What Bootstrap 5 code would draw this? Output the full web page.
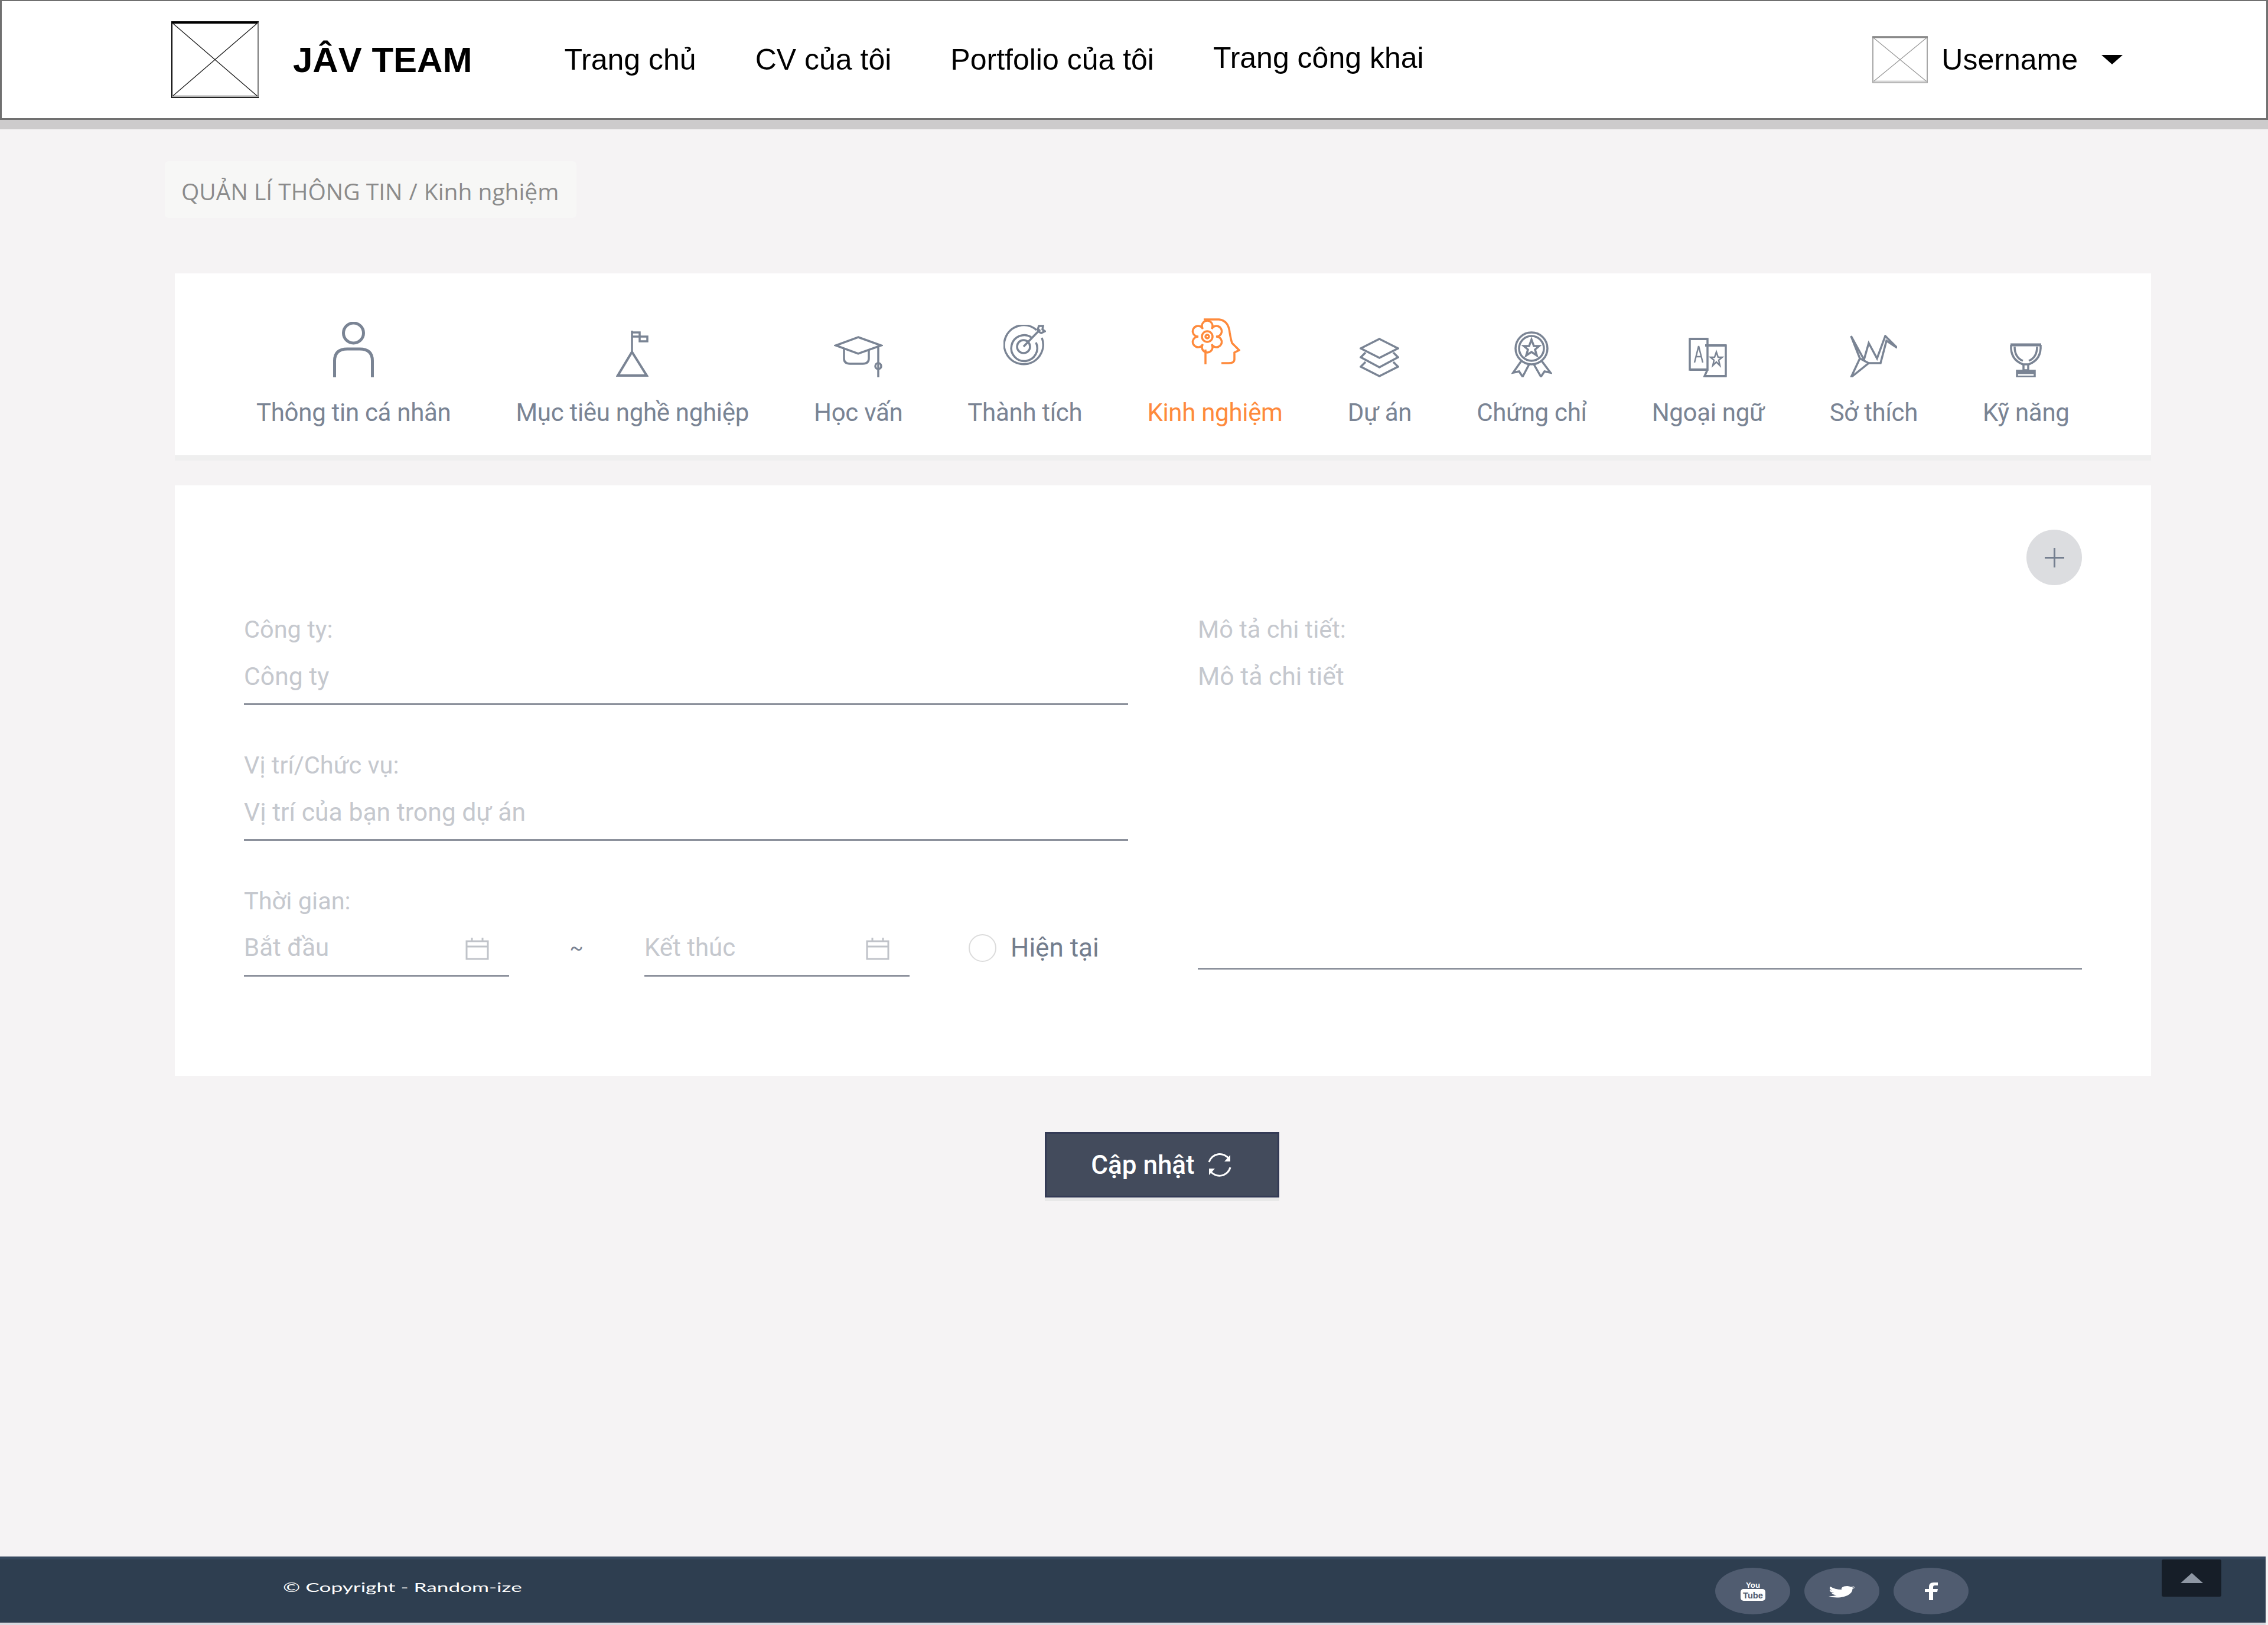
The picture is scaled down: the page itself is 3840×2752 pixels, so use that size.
<!DOCTYPE html>
<html lang="vi">
<head>
    <meta charset="UTF-8">
    <meta name="viewport" content="width=device-width, initial-scale=1.0">
    <title>Kinh nghiệm</title>
    <link href="https://cdn.jsdelivr.net/npm/bootstrap@5.3.0/dist/css/bootstrap.min.css" rel="stylesheet">
    <style>
        body { background: #f5f3f4; min-height: 2752px; font-family: Roboto, sans-serif; }
        .page-top { background: #fff; height: 203px; border: 3px solid #707070; border-top-width: 2px; padding: 0 243px 0 287px; --bs-navbar-nav-link-padding-x: 0; }
        .top-band { height: 16px; background: #cdcbcc; }
        .brand-name { font: bold 60px "Liberation Sans", Arial, sans-serif; color: #000; margin: 0 156px 0 58px; padding: 0; }
        .top-links { gap: 100px; }
        .top-links .nav-link, .user-menu { font: 50px "Liberation Sans", Arial, sans-serif; color: #000; padding: 0; }
        .link-raised { margin-bottom: 6px; }
        .user-menu { gap: 23px; }
        .user-menu::after { border-top: 16px solid #000; border-left: 18px solid transparent; border-right: 18px solid transparent; border-bottom: 0; margin-left: 17px; vertical-align: 2px; }
        .page-main { padding: 54px 198px 0 296px; }
        .crumb { display: inline-flex; background: #f7f7f6; height: 96px; align-items: center; padding: 4px 30px 0 28px; margin: 0 0 94px -17px; border-radius: 6px; font: 39px "Open Sans", sans-serif; --bs-breadcrumb-divider-color: #8b8b8b; --bs-breadcrumb-item-active-color: #8b8b8b; --bs-breadcrumb-item-padding-x: 11px; }
        .crumb .breadcrumb-item { color: #8b8b8b; }
        .tab-card { background: #fff; height: 308px; box-shadow: 0 9px 0 #efefef; padding: 76px 0 0 138px; border: 0; border-radius: 0; margin-bottom: 51px; }
        .tab-list { gap: 110px; }
        .tab-link { padding: 0; color: #7a8494; font-size: 42px; letter-spacing: -.3px; line-height: 50px; display: flex; flex-direction: column; align-items: center; }
        .tab-link:hover { color: #7a8494; }
        .tab-link.current { color: #fe8a3c; }
        .tab-icon { height: 100px; display: flex; align-items: flex-end; margin-bottom: 35px; }
        .tab-icon svg { display: block; fill: none; stroke: #7a8494; stroke-width: 3.5; }
        .current .tab-icon svg { stroke: #fe8a3c; }
        .lift-a svg { margin-bottom: 19px; }
        .lift-b svg { margin-bottom: 22px; }
        .form-card { background: #fff; height: 1000px; padding: 75px 117px 0; border: 0; border-radius: 0; }
        .add-btn { width: 94px; height: 94px; background: #dcdde0; border-radius: 50%; padding: 0; border: 0; }
        .form-cols { --bs-gutter-x: 118px; margin-top: 51px; }
        .field { margin-bottom: 78px; }
        .field-label { font-size: 41.5px; line-height: 48px; color: #c5c8ce; margin: 0 0 31px; display: block; }
        .line-input { border: 0; border-bottom: 3px solid #8c919c; border-radius: 0; padding: 0 0 22px; font-size: 42.7px; line-height: 48px; color: #7a8494; background: transparent; box-shadow: none; }
        .line-input::placeholder { color: #c5c8ce; }
        .detail-input { height: 521px; resize: none; }
        .date-row { gap: 0; }
        .date-box { width: 449px; border-bottom: 3px solid #8c919c; padding-bottom: 22px; }
        .date-box input { border: 0; padding: 0; font-size: 42px; line-height: 48px; height: 48px; width: 340px; background: transparent; outline: 0; }
        .date-box input::placeholder { color: #c5c8ce; }
        .date-box svg { fill: none; stroke: #c0c3c9; stroke-width: 3; margin: 1px 34px -1px auto; flex: none; }
        .tilde { width: 230px; text-align: center; color: #7a8494; font-size: 34px; line-height: 48px; margin-left: -1px; }
        .now-check { margin: 0 0 0 100px; padding: 0; gap: 24px; min-height: 0; }
        .now-check .form-check-input { width: 47px; height: 47px; margin: 0; float: none; border: 2px solid #dcdcdc; }
        .now-check .form-check-label { font-size: 44px; line-height: 48px; color: #737d8d; white-space: nowrap; }
        .save-btn { width: 397px; height: 111px; margin: 95px 0 0 -4px; background: #434b5c; color: #fff; border: 3px solid #333a55; border-radius: 0; box-shadow: 0 6px 0 #e8e8e8; font-size: 44px; font-weight: 500; gap: 20px; padding: 0; }
        .save-btn:hover { background: #434b5c; color: #fff; }
        .page-foot { height: 112px; background: #2e3e50; border-top: 5px solid #36495f; margin: auto 4px 4px 0; padding: 0 75px 0 479px; color: #fff; box-shadow: 0 4px 0 #d9d9df; }
        .copy-text { font: 22px Lato, sans-serif; transform: scaleX(1.6); transform-origin: left center; margin-top: -14px; }
        .social-set { gap: 24px; margin-right: 327px; margin-top: 14px; align-self: flex-start; }
        .social-dot { width: 127px; height: 79px; border-radius: 50%; background: #505c70; }
        .back-top { width: 101px; height: 63px; background: #161e28; border-radius: 3px; }
        .back-top::before { content: ""; border-left: 19px solid transparent; border-right: 19px solid transparent; border-bottom: 17px solid #8e97a3; }
    </style>
</head>
<body class="d-flex flex-column">
    <header class="page-top navbar navbar-expand flex-nowrap">
        <svg width="148" height="130" viewBox="0 0 148 130">
            <path d="M1 1H147V129H1Z" fill="none" stroke="#000" stroke-width="2"/>
            <path d="M0 2H148" stroke="#000" stroke-width="4"/>
            <path d="M147 2V128" stroke="#777" stroke-width="2"/>
            <path d="M1 127H147" stroke="#b5b5b5" stroke-width="3"/>
            <path d="M2 3L146 127M146 3L2 127" stroke="#222" stroke-width="1.4"/>
        </svg>
        <a class="navbar-brand brand-name" href="#">JÂV TEAM</a>
        <ul class="navbar-nav top-links align-items-center">
            <li class="nav-item"><a class="nav-link" href="#">Trang chủ</a></li>
            <li class="nav-item"><a class="nav-link" href="#">CV của tôi</a></li>
            <li class="nav-item"><a class="nav-link" href="#">Portfolio của tôi</a></li>
            <li class="nav-item link-raised"><a class="nav-link" href="#">Trang công khai</a></li>
        </ul>
        <a class="user-menu dropdown-toggle d-flex align-items-center ms-auto text-decoration-none" href="#">
            <svg width="94" height="80" viewBox="0 0 94 80">
                <path d="M1 1H93V79H1Z" fill="none" stroke="#8a8a8a" stroke-width="1.5"/>
                <path d="M0 2H94" stroke="#8a8a8a" stroke-width="3"/>
                <path d="M1 77H93" stroke="#d5d5d5" stroke-width="3"/>
                <path d="M2 3L92 77M92 3L2 77" stroke="#999" stroke-width="1.2"/>
            </svg>
            Username
        </a>
    </header>
    <div class="top-band"></div>

    <main class="page-main">
        <ol class="breadcrumb crumb">
            <li class="breadcrumb-item">QUẢN LÍ THÔNG TIN</li>
            <li class="breadcrumb-item active">Kinh nghiệm</li>
        </ol>

        <div class="card tab-card">
            <ul class="nav tab-list flex-nowrap">
                <li class="nav-item"><a class="nav-link tab-link" href="#">
                    <span class="tab-icon"><svg width="69" height="94" viewBox="0 0 69 94" style="stroke-width:5"><ellipse cx="34.5" cy="19" rx="17" ry="17"/><path d="M2.5 94V66Q2.5 46 24 46H45Q66.5 46 66.5 66V94"/></svg></span>
                    Thông tin cá nhân</a></li>
                <li class="nav-item"><a class="nav-link tab-link" href="#">
                    <span class="tab-icon"><svg width="55" height="79" viewBox="0 0 55 79"><path stroke-width="4" d="M27 36L3 76H52Z"/><path d="M27 0V36"/><path d="M27 3H40V10H53V18H40V10H27"/></svg></span>
                    Mục tiêu nghề nghiệp</a></li>
                <li class="nav-item"><a class="nav-link tab-link" href="#">
                    <span class="tab-icon"><svg width="83" height="70" viewBox="0 0 83 70"><path d="M41 2L80 16L41 30L3 16Z"/><path d="M17 22V38Q17 47 27 47H49Q59 47 59 38V22"/><path d="M75 17V70"/><circle cx="75" cy="51" r="5"/></svg></span>
                    Học vấn</a></li>
                <li class="nav-item"><a class="nav-link tab-link" href="#">
                    <span class="tab-icon lift-a"><svg width="72" height="70" viewBox="0 0 72 70"><path d="M56 9A33 33 0 1 0 65 22"/><path d="M47 21A22 22 0 1 0 55 30"/><ellipse cx="34" cy="37" rx="11" ry="11"/><path d="M34 37L62 8M58 8L60 2L67 2L66 8L70 11L64 14L60 12Z"/></svg></span>
                    Thành tích</a></li>
                <li class="nav-item"><a class="nav-link tab-link current" href="#">
                    <span class="tab-icon lift-b"><svg width="86" height="78" viewBox="0 0 86 78"><path d="M22.5 18A9 9 0 1 1 37.5 18A9 9 0 1 1 45 31A9 9 0 1 1 37.5 44A9 9 0 1 1 22.5 44A9 9 0 1 1 15 31A9 9 0 1 1 22.5 18Z"/><ellipse cx="30" cy="31" rx="9" ry="9"/><ellipse cx="30" cy="31" rx="3" ry="3"/><path d="M24 2H50Q66 4 68 24Q70 36 72 42L84 54L76 58V70Q76 76 66 76H54"/><path d="M27 53V78"/></svg></span>
                    Kinh nghiệm</a></li>
                <li class="nav-item"><a class="nav-link tab-link" href="#">
                    <span class="tab-icon"><svg width="67" height="67" viewBox="0 0 67 67"><path d="M33.5 2L65 18L33.5 34L2 18Z"/><path d="M10 25L2 33L33.5 50L65 33L57 25"/><path d="M10 41L2 49L33.5 65L65 49L57 41"/></svg></span>
                    Dự án</a></li>
                <li class="nav-item"><a class="nav-link tab-link" href="#">
                    <span class="tab-icon"><svg width="69" height="78" viewBox="0 0 69 78"><ellipse cx="34" cy="29" rx="27" ry="27"/><ellipse cx="34" cy="29" rx="21" ry="21"/><path d="M34 14L38 25H47L40 31L43 41L34 35L25 41L28 31L21 25H30Z"/><path d="M17 50L3 70L13 68L19 77L30 56M51 50L66 70L56 68L50 77L38 56"/></svg></span>
                    Chứng chỉ</a></li>
                <li class="nav-item"><a class="nav-link tab-link" href="#">
                    <span class="tab-icon"><svg width="66" height="67" viewBox="0 0 66 67"><path d="M28 13H63V65H27L32 54"/><path d="M2 2H32V54H2Z"/><path stroke-width="4" d="M2 2H32M2 54H32M28 13H63M27 65H63"/><path stroke-width="2.5" d="M10 42L17 14L24 42M13 32H21"/><path stroke-width="2.5" d="M47 24L50 33H57L51 38L53 47L47 41L41 47L43 38L37 33H44Z"/></svg></span>
                    Ngoại ngữ</a></li>
                <li class="nav-item"><a class="nav-link tab-link" href="#">
                    <span class="tab-icon"><svg width="80" height="72" viewBox="0 0 80 72"><path d="M2 2L17 40L2 72L32 48L52 48L62 10L80 22L60 2L46 40L32 14L24 42Z"/><path d="M17 40L32 48"/></svg></span>
                    Sở thích</a></li>
                <li class="nav-item"><a class="nav-link tab-link" href="#">
                    <span class="tab-icon"><svg width="58" height="58" viewBox="0 0 58 58"><path stroke-width="5" d="M3 3H55"/><path d="M4 3C3 18 8 30 24 36H34C50 30 55 18 54 3"/><path d="M10 6C10 18 14 26 24 30M48 6C48 18 44 26 34 30"/><path d="M25 36V46H33V36"/><path d="M14 47H44V57H14Z"/><path stroke-width="5" d="M14 50H44"/></svg></span>
                    Kỹ năng</a></li>
            </ul>
        </div>

        <form class="card form-card">
            <div class="d-flex justify-content-end">
                <button type="button" class="btn add-btn d-flex align-items-center justify-content-center">
                    <svg width="33" height="33" viewBox="0 0 33 33"><path d="M16.5 0V33M0 16.5H33" stroke="#757f90" stroke-width="3"/></svg>
                </button>
            </div>
            <div class="row form-cols">
                <div class="col-6">
                    <div class="field">
                        <label class="field-label" for="cong_ty">Công ty:</label>
                        <input type="text" class="form-control line-input" id="cong_ty" placeholder="Công ty">
                    </div>
                    <div class="field">
                        <label class="field-label" for="vi_tri">Vị trí/Chức vụ:</label>
                        <input type="text" class="form-control line-input" id="vi_tri" placeholder="Vị trí của bạn trong dự án">
                    </div>
                    <div class="field">
                        <label class="field-label" for="bat_dau">Thời gian:</label>
                        <div class="d-flex align-items-start date-row">
                            <div class="date-box d-flex align-items-center">
                                <input type="text" id="bat_dau" placeholder="Bắt đầu">
                                <svg width="40" height="40" viewBox="0 0 40 40"><path d="M2 8H38V38H2ZM2 17H38M11 2V8M29 2V8"/></svg>
                            </div>
                            <span class="tilde">~</span>
                            <div class="date-box d-flex align-items-center">
                                <input type="text" id="ket_thuc" placeholder="Kết thúc">
                                <svg width="40" height="40" viewBox="0 0 40 40"><path d="M2 8H38V38H2ZM2 17H38M11 2V8M29 2V8"/></svg>
                            </div>
                            <div class="form-check now-check d-flex align-items-center">
                                <input class="form-check-input" type="radio" id="hien_tai">
                                <label class="form-check-label" for="hien_tai">Hiện tại</label>
                            </div>
                        </div>
                    </div>
                </div>
                <div class="col-6">
                    <label class="field-label" for="mo_ta">Mô tả chi tiết:</label>
                    <textarea class="form-control line-input detail-input" id="mo_ta" placeholder="Mô tả chi tiết"></textarea>
                </div>
            </div>
        </form>

        <div class="d-flex justify-content-center">
            <button type="button" class="btn save-btn d-flex align-items-center justify-content-center">
                Cập nhật
                <svg width="44" height="44" viewBox="0 0 44 44" fill="none" stroke="#fff" stroke-width="3"><path d="M4 17A19 19 0 0 1 38 12"/><path d="M40 26A19 19 0 0 1 6 32"/><path fill="#fff" stroke="none" d="M40 5V16H30ZM4 39V28H14Z"/></svg>
            </button>
        </div>
    </main>

    <footer class="page-foot d-flex align-items-center">
        <span class="copy-text">© Copyright - Random-ize</span>
        <div class="d-flex social-set ms-auto">
            <a href="#" class="social-dot d-flex align-items-center justify-content-center">
                <svg width="44" height="33" viewBox="0 0 44 33"><text x="22" y="11" text-anchor="middle" fill="#fff" font-family="Liberation Sans" font-weight="700" font-size="13" textLength="24" lengthAdjust="spacingAndGlyphs">You</text><rect x="1" y="13" width="42" height="20" rx="5" fill="#fff"/><text x="22" y="29" text-anchor="middle" fill="#505c70" font-family="Liberation Sans" font-weight="700" font-size="15" textLength="34" lengthAdjust="spacingAndGlyphs">Tube</text></svg>
            </a>
            <a href="#" class="social-dot d-flex align-items-center justify-content-center">
                <svg width="45" height="24" viewBox="0 0 16 16" preserveAspectRatio="none"><path fill="#fff" d="M5.026 15c6.038 0 9.341-5.003 9.341-9.334 0-.14 0-.282-.006-.422A6.685 6.685 0 0 0 16 3.542a6.658 6.658 0 0 1-1.889.518 3.301 3.301 0 0 0 1.447-1.817 6.533 6.533 0 0 1-2.087.793A3.286 3.286 0 0 0 7.875 6.03a9.325 9.325 0 0 1-6.767-3.429 3.289 3.289 0 0 0 1.018 4.382A3.323 3.323 0 0 1 .64 6.575v.045a3.288 3.288 0 0 0 2.632 3.218 3.203 3.203 0 0 1-.865.115 3.23 3.23 0 0 1-.614-.057 3.283 3.283 0 0 0 3.067 2.277A6.588 6.588 0 0 1 .78 13.58a6.32 6.32 0 0 1-.78-.045A9.344 9.344 0 0 0 5.026 15z"/></svg>
            </a>
            <a href="#" class="social-dot d-flex align-items-center justify-content-center">
                <svg width="24" height="30" viewBox="0 0 24 30"><path fill="#fff" d="M8 30V16H1V11H8V7Q8 0 16 0H23V5H18Q15 5 15 8V11H23L22 16H15V30Z"/></svg>
            </a>
        </div>
        <a href="#" class="back-top d-flex align-items-center justify-content-center align-self-start"></a>
    </footer>

    <script src="https://cdn.jsdelivr.net/npm/bootstrap@5.3.0/dist/js/bootstrap.bundle.min.js"></script>
</body>
</html>
